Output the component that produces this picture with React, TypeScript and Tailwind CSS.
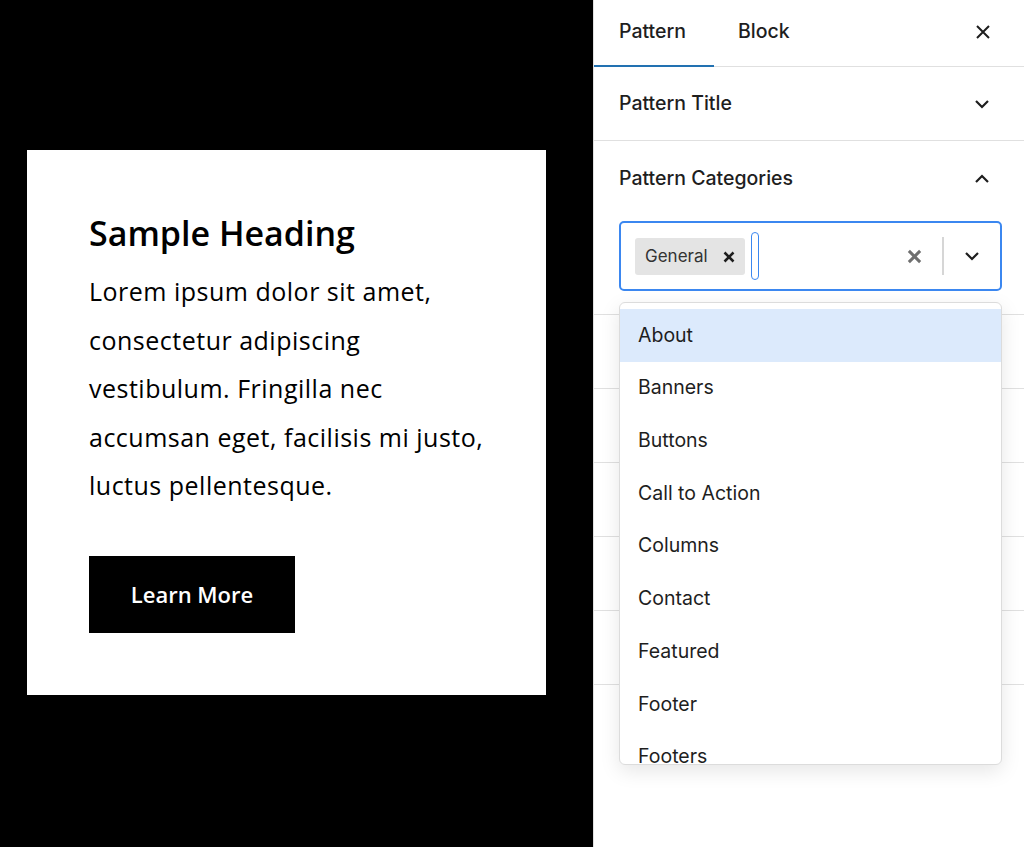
import React from "react";

const items = ["About", "Banners", "Buttons", "Call to Action", "Columns", "Contact", "Featured", "Footer", "Footers"];

function Chevron({ up = false, className = "" }: { up?: boolean; className?: string }) {
  return (
    <svg width="18" height="18" viewBox="0 0 18 18" className={className}>
      {up ? (
        <path d="M3 12 L9 6 L15 12" fill="none" stroke="#1e1e1e" strokeWidth="2.2" />
      ) : (
        <path d="M3 6 L9 12 L15 6" fill="none" stroke="#1e1e1e" strokeWidth="2.2" />
      )}
    </svg>
  );
}

function XIcon({ size = 16, color = "#1e1e1e", w = 2 }: { size?: number; color?: string; w?: number }) {
  return (
    <svg width={size} height={size} viewBox="0 0 16 16">
      <path d="M2 2 L14 14 M14 2 L2 14" stroke={color} strokeWidth={w} fill="none" />
    </svg>
  );
}

const lines = [
  "Lorem ipsum dolor sit amet,",
  "consectetur adipiscing",
  "vestibulum. Fringilla nec",
  "accumsan eget, facilisis mi justo,",
  "luctus pellentesque.",
];

export default function App() {
  return (
    <div className="flex w-[1024px] h-[847px] bg-black overflow-hidden" style={{ fontFamily: "Inter, 'Noto Sans', sans-serif" }}>
      {/* Left canvas */}
      <div className="w-[593px] h-full pt-[150px] pl-[27px]">
        <div className="w-[519px] h-[545px] bg-white pl-[62px] pt-[62px]" style={{ fontFamily: "'Open Sans', 'Noto Sans', sans-serif" }}>
          <h2 className="text-[34px] leading-[42px] font-semibold text-black">Sample Heading</h2>
          <div className="mt-[13px] text-[25px] leading-[48.5px] text-black tracking-[0.5px]">
            {lines.map((l) => (
              <div key={l} className="whitespace-nowrap">{l}</div>
            ))}
          </div>
          <div className="mt-[46px] w-[206px] h-[77px] bg-black flex items-center justify-center text-white text-[22px] font-semibold">
            Learn More
          </div>
        </div>
      </div>

      {/* Right panel */}
      <div className="relative w-[431px] h-full bg-white border-l border-[#e0e0e0] text-[#1e1e1e]">
        <div className="flex items-center h-[67px] border-b border-[#e0e0e0] pb-[2px]">
          <div className="relative w-[120px] h-full flex items-center pl-[25px] text-[19.5px] font-medium">
            Pattern
            <div className="absolute left-0 right-0 bottom-[-3px] h-[2px] bg-[#2271b1]" />
          </div>
          <div className="h-full flex items-center pl-[24px] text-[19.5px] font-medium">Block</div>
          <div className="ml-auto mr-[33px] flex items-center">
            <XIcon size={16} w={2} />
          </div>
        </div>

        <div className="flex items-center h-[74px] border-b border-[#e0e0e0] pl-[25px] pr-[33px]">
          <span className="text-[19.5px] font-medium">Pattern Title</span>
          <Chevron className="ml-auto" />
        </div>

        <div className="h-[174px] border-b border-[#e0e0e0] px-[25px]">
          <div className="flex items-center h-[76px] pr-[8px]">
            <span className="text-[19.5px] font-medium">Pattern Categories</span>
            <Chevron up className="ml-auto" />
          </div>
          <div className="flex items-center w-[383px] h-[70px] mt-[4px] border-2 border-[#3b87f0] rounded-[5px] pl-[14px]">
            <div className="flex items-center h-[37px] w-[110px] bg-[#e4e4e4] rounded-[3px] pl-[10px] pt-[2px] text-[17px] text-[#333]">
              General
              <span className="ml-auto mr-[10px] flex">
                <XIcon size={12} w={3.4} color="#1e1e1e" />
              </span>
            </div>
            <div className="ml-[6px] w-[8px] h-[48px] border-[1.5px] border-[#3b87f0] rounded-full" />
            <div className="ml-auto mr-[20px] flex">
              <XIcon size={15} w={3.2} color="#6f6f6f" />
            </div>
            <div className="w-[2px] h-[38px] bg-[#d6d6d6]" />
            <div className="w-[56px] flex justify-center">
              <Chevron />
            </div>
          </div>
        </div>

        {[0, 1, 2, 3, 4].map((i) => (
          <div key={i} className="h-[74px] border-b border-[#e0e0e0]" />
        ))}

        {/* Dropdown */}
        <div className="absolute left-[25px] top-[302px] w-[383px] h-[463px] bg-white rounded-[6px] border border-[#dcdcdc] shadow-[0_6px_20px_rgba(0,0,0,0.10)] overflow-hidden pt-[6px]">
          {items.map((it, i) => (
            <div
              key={it}
              className={`h-[52.7px] flex items-center pl-[18px] text-[19.5px] text-[#1e1e1e] ${i === 0 ? "bg-[#dceafc]" : ""}`}
            >
              {it}
            </div>
          ))}
        </div>
      </div>
    </div>
  );
}
